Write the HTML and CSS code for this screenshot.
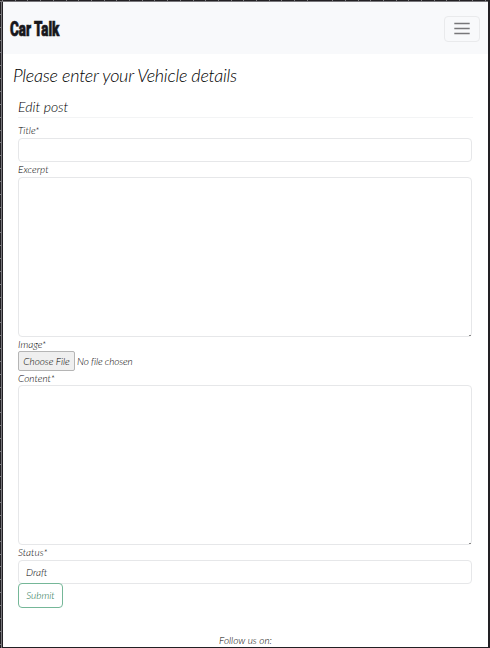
FILE: index.html
```
<!DOCTYPE html>
<html lang="en">
<head>
<meta charset="utf-8">
<title>Car Talk</title>
<link rel="stylesheet" href="styles.css">
</head>
<body>
<div class="frame">
<div class="page">
  <nav class="navbar">
    <a class="brand">Car Talk</a>
    <button class="toggler" aria-label="Menu">
      <svg width="20" height="20" viewBox="0 0 20 20"><path d="M2.3 4.5h15.4M2.3 9.5h15.4M2.3 14.5h15.4" stroke="#77777a" stroke-width="1.4"/></svg>
    </button>
  </nav>
  <main>
    <h1>Please enter your Vehicle details</h1>
    <form>
      <h2>Edit post</h2>
      <label class="title-label">Title*</label>
      <div class="field input"></div>
      <label class="excerpt-label">Excerpt</label>
      <div class="field area"><i class="grip"></i></div>
      <label class="image-label">Image*</label>
      <div class="file"><span class="choose">Choose File</span><span class="none">No file chosen</span></div>
      <label class="content-label">Content*</label>
      <div class="field area"><i class="grip"></i></div>
      <label class="status-label">Status*</label>
      <div class="field select">Draft</div>
      <button class="submit" type="button">Submit</button>
    </form>
  </main>
  <footer>Follow us on:</footer>
</div>
</div>
</body>
</html>
```
FILE: styles.css
```
* { box-sizing: border-box; }
body { margin: 0; font: italic 300 10px/14px Lato, "Liberation Sans", sans-serif; color: #000; }
.frame {
  height: 648px;
  padding: 2px 2px 1px 3px;
  overflow: hidden;
  background:
    linear-gradient(#77767a, #77767a) 2px 1px / 486px 1px no-repeat,
    linear-gradient(#77767a, #77767a) 1px 1px / 1px 647px no-repeat,
    repeating-linear-gradient(90deg, transparent 0 2px, #77767a 2px 3px, transparent 3px 12.7px) 0 0 / 488px 1px no-repeat,
    repeating-linear-gradient(transparent 0 1px, #77767a 1px 2px, transparent 2px 12.85px) 0 0 / 1px 648px no-repeat,
    #222024;
}
.page { height: 645px; background: #fff; display: flex; flex-direction: column; }
.navbar { height: 52px; flex: none; background: #f8f9fb; padding: 1px 8px 0 7px; display: flex; align-items: center; justify-content: space-between; }
.brand { font: 900 20px/24px Roboto, "Liberation Sans", sans-serif; color: #17171b; width: 50px; white-space: nowrap; transform: scaleX(.67); transform-origin: left; padding-top: 1px; -webkit-text-stroke: .7px #17171b; }
.toggler { width: 36px; height: 26px; padding: 0; border: 1px solid #e9eaec; border-radius: 4px; background: none; display: flex; align-items: center; justify-content: center; }
main { padding: 0 15px; }
h1 { margin: 8px 0 0 -5px; font-size: 18px; line-height: 26px; font-weight: 300; letter-spacing: -.25px; white-space: nowrap; }
h2 { margin: 7px 0 0; height: 23px; font-size: 14px; line-height: 23px; font-weight: 300; border-bottom: 1px solid #f3f4f5; }
label { display: block; white-space: nowrap; }
.title-label { height: 20px; padding-top: 5px; }
.excerpt-label { height: 15px; }
.image-label { height: 14px; }
.content-label { height: 14px; }
.status-label { height: 15px; }
.field { position: relative; width: 454px; border: 1px solid #e6e7e9; border-radius: 4px; }
.input { height: 24px; }
.area { height: 160px; }
.grip { position: absolute; right: 0; bottom: 0; width: 2px; height: 1px; background: #888; }
.file { display: flex; align-items: center; height: 20px; white-space: nowrap; letter-spacing: -.05px; }
.choose { width: 57px; height: 20px; border: 1px solid #b5b5b5; border-radius: 2px; background: #efefef; display: flex; align-items: center; justify-content: center; margin-right: 2px; }
.none { letter-spacing: -.15px; }
.select { height: 24px; padding: 4px 7px; }
.submit { position: relative; width: 45px; height: 25px; margin-top: -1px; display: flex; align-items: center; justify-content: center; padding: 0 0 1px; border: 1px solid #75b798; border-radius: 4px; background: #fff; color: #0d6b3f; font: inherit; }
footer { text-align: center; margin-top: 25px; }
```
